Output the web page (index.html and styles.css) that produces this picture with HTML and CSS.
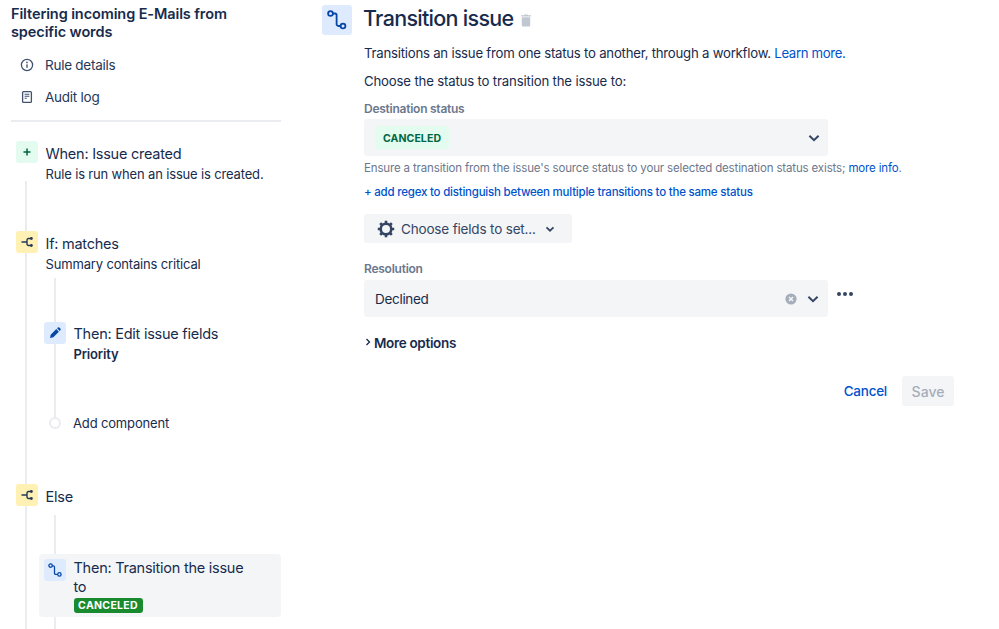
FILE: index.html
```html
<!DOCTYPE html>
<html lang="en">
<head>
<meta charset="utf-8">
<title>Transition issue</title>
<link rel="stylesheet" href="styles.css">
</head>
<body>
<div class="page">
  <aside class="sidebar">
    <h2 class="rule-title">Filtering incoming E-Mails from specific words</h2>
    <nav class="side-nav">
      <a class="side-link">
        <svg class="nav-icon" viewBox="0 0 16 16"><circle cx="8" cy="8" r="5.6" fill="none" stroke="#42526e" stroke-width="1.3"/><rect x="7.3" y="7.2" width="1.4" height="3.6" rx=".5" fill="#42526e"/><circle cx="8" cy="5.4" r=".85" fill="#42526e"/></svg>
        Rule details
      </a>
      <a class="side-link">
        <svg class="nav-icon" viewBox="0 0 16 16"><rect x="3.6" y="2.6" width="8.8" height="10.8" rx="1" fill="none" stroke="#42526e" stroke-width="1.3"/><path d="M5.6 5.2h4.8M5.6 7.2h4.8M5.6 9.2h2.2" stroke="#42526e" stroke-width="1.1" fill="none"/></svg>
        Audit log
      </a>
    </nav>
    <hr class="divider">
    <div class="flow">
      <div class="step step-when">
        <span class="tile tile-green"><svg viewBox="0 0 22 22"><path d="M11 7.5v7M7.5 11h7" stroke="#006644" stroke-width="1.5" fill="none"/></svg></span>
        <div class="step-body"><div class="step-title">When: Issue created</div><div class="step-sub">Rule is run when an issue is created.</div></div>
      </div>
      <div class="step step-if">
        <span class="tile tile-yellow"><svg viewBox="0 0 22 22"><path d="M5.500 11h5.500M15 7.500h-2.600a1.400 1.400 0 0 0-1.400 1.400v4.200a1.400 1.400 0 0 0 1.400 1.400H15" stroke="#253858" stroke-width="1.400" fill="none"/><circle cx="15.400" cy="7.500" r="1.400" fill="#253858"/><circle cx="15.400" cy="14.500" r="1.400" fill="#253858"/></svg></span>
        <div class="step-body"><div class="step-title">If: matches</div><div class="step-sub">Summary contains critical</div></div>
      </div>
      <div class="branch branch-first">
        <div class="step step-edit">
          <span class="tile tile-blue"><svg viewBox="0 0 22 22"><path d="M6 16l.7-3.300 5.600-5.600 2.600 2.600-5.600 5.600zM13.100 6.300l.8-.8a1 1 0 0 1 1.400 0l1.200 1.200a1 1 0 0 1 0 1.400l-.8.8z" fill="#0747a6"/></svg></span>
          <div class="step-body"><div class="step-title">Then: Edit issue fields</div><div class="step-sub step-strong">Priority</div></div>
        </div>
        <div class="add-row"><span class="add-dot"></span><span class="add-text">Add component</span></div>
      </div>
      <div class="step step-else">
        <span class="tile tile-yellow"><svg viewBox="0 0 22 22"><path d="M5.500 11h5.500M15 7.500h-2.600a1.400 1.400 0 0 0-1.400 1.400v4.200a1.400 1.400 0 0 0 1.400 1.400H15" stroke="#253858" stroke-width="1.400" fill="none"/><circle cx="15.400" cy="7.500" r="1.400" fill="#253858"/><circle cx="15.400" cy="14.500" r="1.400" fill="#253858"/></svg></span>
        <div class="step-body"><div class="step-title">Else</div></div>
      </div>
      <div class="branch branch-second">
        <div class="step step-selected">
          <span class="tile tile-blue"><svg viewBox="0 0 22 22"><circle cx="6.600" cy="6.600" r="1.700" fill="none" stroke="#0747a6" stroke-width="1.300"/><circle cx="15.400" cy="15.400" r="1.700" fill="none" stroke="#0747a6" stroke-width="1.300"/><path d="M8.200 6.800h1.100a1.200 1.200 0 0 1 1.200 1.200v6.200a1.200 1.200 0 0 0 1.200 1.200h1.900" stroke="#0747a6" stroke-width="1.300" fill="none"/></svg></span>
          <div class="step-body"><div class="step-title">Then: Transition the issue to</div><span class="lozenge-solid">CANCELED</span></div>
        </div>
      </div>
    </div>
  </aside>

  <main class="main">
    <span class="hero-tile"><svg viewBox="0 0 30 30"><circle cx="8.500" cy="8.500" r="2.400" fill="none" stroke="#0747a6" stroke-width="1.800"/><circle cx="21" cy="21" r="2.400" fill="none" stroke="#0747a6" stroke-width="1.800"/><path d="M10.900 8.500h2.100a1.600 1.600 0 0 1 1.600 1.600v9.100a1.800 1.800 0 0 0 1.800 1.800h2.200" stroke="#0747a6" stroke-width="1.800" fill="none"/></svg></span>
    <div class="content">
      <header class="heading">
        <h1 class="title">Transition issue</h1>
        <svg class="trash" viewBox="0 0 12 14"><path d="M4.400 1.400h3.200l.5.8H11v1.200H1V2.200h2.900zM1.800 4.300h8.400v8.100a1 1 0 0 1-1 1H2.800a1 1 0 0 1-1-1z" fill="#c1c7d0"/></svg>
      </header>
      <p class="lead">Transitions an issue from one status to another, through a workflow. <a class="link link-lead">Learn more.</a></p>
      <p class="lead lead-next">Choose the status to transition the issue to:</p>
      <label class="field-label label-first">Destination status</label>
      <div class="select select-status">
        <span class="lozenge">CANCELED</span>
        <svg class="chev" viewBox="0 0 14 14"><path d="M2.400 4.800L7 9.200l4.600-4.400" fill="none" stroke="#344563" stroke-width="2"/></svg>
      </div>
      <p class="help">Ensure a transition from the issue's source status to your selected destination status exists; <a class="link">more info</a>.</p>
      <a class="link regex">+ add regex to distinguish between multiple transitions to the same status</a>
      <button class="choose" type="button">
        <svg class="gear" viewBox="0 0 18 18"><circle cx="9" cy="9" r="5.300" fill="none" stroke="#344563" stroke-width="2.600"/><path d="M9 .8v2.600M9 14.600v2.600M.8 9h2.600M14.600 9h2.600M3.200 3.200L5 5M13 13l1.800 1.800M14.800 3.200L13 5M5 13l-1.800 1.800" stroke="#344563" stroke-width="2.600" fill="none"/></svg>
        <span>Choose fields to set...</span>
        <svg class="chev-small" viewBox="0 0 10 10"><path d="M1.500 3.300L5 6.700l3.500-3.400" fill="none" stroke="#344563" stroke-width="1.700"/></svg>
      </button>
      <label class="field-label label-second">Resolution</label>
      <div class="field-row">
        <div class="select select-resolution">
          <span class="select-value">Declined</span>
          <svg class="clear" viewBox="0 0 12 12"><circle cx="6" cy="6" r="5.600" fill="#a5adba"/><path d="M4 4l4 4M8 4l-4 4" stroke="#f4f5f7" stroke-width="1.500"/></svg>
          <svg class="chev" viewBox="0 0 14 14"><path d="M2.400 4.800L7 9.200l4.600-4.400" fill="none" stroke="#344563" stroke-width="2"/></svg>
        </div>
        <span class="dots"><i></i><i></i><i></i></span>
      </div>
      <div class="more"><svg class="chev-right" viewBox="0 0 6 8"><path d="M1.500 1L4.500 4l-3 3" fill="none" stroke="#172b4d" stroke-width="1.300"/></svg><span>More options</span></div>
      <div class="actions">
        <a class="cancel">Cancel</a>
        <button class="save" type="button" disabled>Save</button>
      </div>
    </div>
  </main>
</div>
</body>
</html>
```
FILE: styles.css
```css
* { box-sizing: border-box; }
html, body { margin: 0; height: 100%; overflow: hidden; background: #fff; }
body { font-family: Inter, "Liberation Sans", sans-serif; color: #172b4d; font-size: 14px; }
.page { display: flex; height: 629px; overflow: hidden; }

.sidebar { width: 270px; margin-left: 11px; flex: none; }
.rule-title { margin: 5px 0 0; font-size: 14.5px; line-height: 18px; font-weight: 600; color: #172b4d; letter-spacing: -.1px; }
.side-nav { margin-top: 8px; display: flex; flex-direction: column; }
.side-link { display: flex; align-items: center; height: 32px; font-size: 13.5px; letter-spacing: -.25px; color: #253858; gap: 10px; padding-left: 8px; }
.nav-icon { width: 16px; height: 16px; flex: none; }
.divider { margin: 7px 0 0; height: 2px; border: 0; background: #ebecf0; }

.flow { position: relative; height: 510px; }
.flow::before { content: ""; position: absolute; left: 14px; top: 40px; bottom: 0; width: 2px; background: #ebecf0; }
.step { position: relative; display: flex; gap: 7.5px; }
.step-when { margin: 19px 0 0 5px; }
.step-if { margin: 47px 0 0 5px; }
.step-else { margin: 0 0 0 5px; }
.tile { width: 22px; height: 22px; flex: none; border-radius: 3px; display: block; }
.tile svg { display: block; width: 22px; height: 22px; }
.tile-green { background: #e3fcef; }
.tile-yellow { background: #fff0b3; }
.tile-blue { background: #deebff; }
.step-body { min-width: 0; }
.step-title { font-size: 14.5px; letter-spacing: -.25px; line-height: 20px; color: #172b4d; padding-top: 3px; }
.step-sub { font-size: 13px; letter-spacing: -.16px; line-height: 20px; color: #172b4d; }
.step-strong { font-weight: 600; }

.branch { position: relative; margin-left: 28px; }
.branch::before { content: ""; position: absolute; left: 15px; width: 2px; background: #ebecf0; }
.branch-first { height: 210px; padding-top: 48px; }
.branch-first::before { top: 4px; height: 145px; }
.branch-second { height: 122px; padding-top: 47px; }
.branch-second::before { top: 8px; bottom: 0; }
.step-edit { margin-left: 5px; }
.step-edit .step-title { padding-top: 2px; }
.add-row { position: relative; display: flex; align-items: center; gap: 12px; margin: 49px 0 0 10px; height: 20px; font-size: 13px; letter-spacing: -.15px; }
.add-dot { width: 12px; height: 12px; border-radius: 50%; background: #fff; border: 2px solid #ebecf0; flex: none; }
.step-selected { background: #f4f5f7; border-radius: 4px; width: 242px; height: 63px; padding: 5px 0 0 5px; }
.step-selected .step-body { width: 180px; margin-top: -1px; }
.step-selected .step-title { padding-top: 0; line-height: 19px; }
.lozenge-solid { display: block; width: 69px; height: 15px; margin-top: 2px; background: #1a8a2f; color: #fff; font-size: 10.5px; line-height: 15px; font-weight: 700; border-radius: 3px; text-align: center; letter-spacing: .3px; }

.main { display: flex; gap: 12px; margin-left: 41px; flex: 1; padding-top: 5px; min-width: 0; }
.hero-tile { width: 30px; height: 30px; flex: none; background: #deebff; border-radius: 3px; }
.hero-tile svg { display: block; width: 30px; height: 30px; }
.content { width: 590px; flex: none; }
.heading { display: flex; align-items: center; gap: 6px; height: 29px; }
.title { margin: -4px 0 0 -1px; font-size: 21.5px; font-weight: 500; line-height: 28px; color: #172b4d; letter-spacing: -.7px; }
.trash { width: 12px; height: 14px; margin-top: 0; }
.lead { margin: 9px 0 0; font-size: 13.2px; letter-spacing: -.23px; line-height: 20px; color: #172b4d; }
.lead-next { margin-top: 8px; letter-spacing: -.17px; }
.link { color: #0052cc; }
.link-lead { letter-spacing: -.35px; }
.field-label { display: block; font-size: 12px; letter-spacing: -.25px; line-height: 16px; font-weight: 600; color: #6b778c; }
.label-first { margin-top: 10px; }
.label-second { margin-top: 18px; }
.select { width: 464px; background: #f4f5f7; border-radius: 3px; display: flex; align-items: center; }
.select-status { height: 37px; margin-top: 2px; padding: 0 7px 0 11px; justify-content: space-between; }
.lozenge { display: block; width: 74px; height: 23px; background: #e3fcef; color: #006644; font-size: 10.5px; line-height: 25px; font-weight: 700; border-radius: 3px; text-align: center; letter-spacing: .1px; }
.chev { width: 14px; height: 14px; flex: none; }
.help { margin: 3px 0 0; font-size: 11.5px; letter-spacing: -.152px; line-height: 18px; color: #6b778c; }
.regex { display: block; margin-top: 7px; font-size: 11.5px; letter-spacing: -.22px; line-height: 16px; font-weight: 500; }
.choose { display: flex; align-items: center; width: 208px; height: 29px; margin-top: 14px; padding: 0 0 0 13px; border: 0; border-radius: 3px; background: #f4f5f7; color: #344563; font: inherit; font-size: 13.5px; letter-spacing: -.17px; }
.gear { width: 18px; height: 18px; flex: none; margin-right: 6px; }
.chev-small { width: 10px; height: 10px; flex: none; margin-left: 9px; }
.field-row { display: flex; align-items: flex-start; margin-top: 3px; }
.select-resolution { height: 37px; padding: 0 8px 0 11px; }
.select-value { flex: 1; font-size: 13.5px; letter-spacing: -.3px; color: #172b4d; }
.clear { width: 12px; height: 12px; flex: none; margin-right: 9px; }
.dots { display: flex; gap: 2px; margin: 12px 0 0 9px; }
.dots i { width: 4px; height: 4px; border-radius: 50%; background: #344563; display: block; }
.more { display: flex; align-items: center; gap: 3px; margin-top: 16px; padding-left: 1px; font-size: 13.5px; letter-spacing: -.33px; line-height: 20px; font-weight: 600; color: #172b4d; }
.chev-right { width: 6px; height: 8px; flex: none; margin-top: -2px; }
.actions { display: flex; align-items: center; justify-content: flex-end; gap: 15px; margin-top: 23px; }
.cancel { color: #0052cc; font-size: 13.5px; letter-spacing: -.25px; font-weight: 500; }
.save { width: 52px; height: 30px; border: 0; border-radius: 3px; background: #f4f5f7; color: #a5adba; font: inherit; font-size: 14px; font-weight: 500; padding: 0; }
```
